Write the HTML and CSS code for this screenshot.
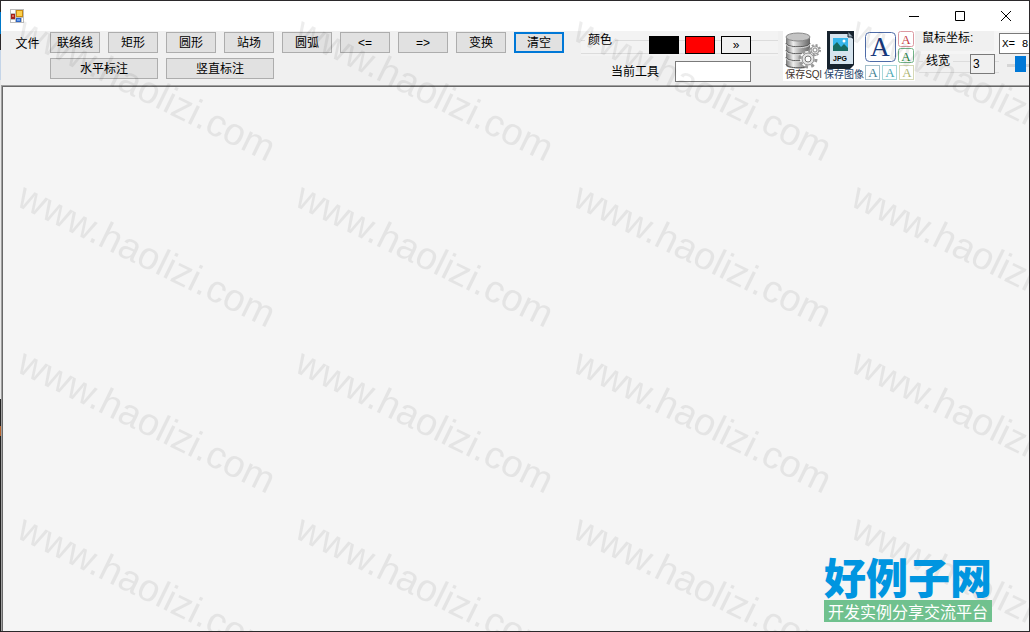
FILE: index.html
```html
<!DOCTYPE html>
<html lang="zh-CN">

<head>
  <meta charset="UTF-8">
  <meta name="viewport" content="width=device-width, initial-scale=1.0">
  <title>站场绘图</title>

  <link rel="stylesheet" href="styles.css">
</head>

<body>
  <div class="window">
    <header class="titlebar">
      <svg class="app-icon" width="14" height="14" viewBox="0 0 14 14">
        <rect width="14" height="14" fill="#bdbdbd"/>
        <path d="M1 1h4v3H1zM1 11h4v2H1zM12 9h1v4h-1z" fill="#fff"/>
        <rect x="6" y="1" width="7" height="7" fill="#c98a10"/>
        <rect x="7" y="2" width="5" height="5" fill="#fdd04a"/>
        <rect x="1" y="5" width="4" height="5" fill="#a3201a"/>
        <rect x="2" y="6" width="2" height="2" fill="#e0695c"/>
        <rect x="6" y="9" width="5" height="4" fill="#2b63c4"/>
        <rect x="7" y="10" width="3" height="2" fill="#6ea2ee"/>
      </svg>
      <div class="window-buttons">
        <button type="button" aria-label="最小化"><svg width="12" height="12" viewBox="0 0 12 12"><path d="M1 6.500h10"/></svg></button>
        <button type="button" aria-label="最大化"><svg width="12" height="12" viewBox="0 0 12 12"><path d="M1.500 1.500h9v9h-9z"/></svg></button>
        <button type="button" aria-label="关闭"><svg width="12" height="12" viewBox="0 0 12 12"><path d="M1 1l10 10M11 1L1 11"/></svg></button>
      </div>
    </header>

    <div class="toolbar">
      <button type="button" class="menu">文件</button>

      <div class="tools">
        <button type="button">联络线</button>
        <button type="button">矩形</button>
        <button type="button">圆形</button>
        <button type="button">站场</button>
        <button type="button">圆弧</button>
        <button type="button">&lt;=</button>
        <button type="button">=&gt;</button>
        <button type="button">变换</button>
        <button type="button" class="active">清空</button>
        <button type="button" class="wide">水平标注</button>
        <button type="button" class="wide">竖直标注</button>
      </div>

      <div class="color-panel">
        <div class="colors">
          <span class="caption">颜色</span>
          <button type="button" class="swatch black" aria-label="黑色"></button>
          <button type="button" class="swatch red" aria-label="红色"></button>
          <button type="button" class="swatch">»</button>
        </div>
        <div class="current">
          <label for="tool">当前工具</label>
          <input id="tool" type="text">
        </div>
      </div>

      <div class="icons">
        <button type="button" class="icon-button save-sql">
          <svg width="40" height="38" viewBox="0 0 40 38">
            <defs>
              <linearGradient id="metal">
                <stop offset="0" stop-color="#777"/>
                <stop offset="0.3" stop-color="#eee"/>
                <stop offset="0.6" stop-color="#aaa"/>
                <stop offset="1" stop-color="#666"/>
              </linearGradient>
            </defs>
            <path d="M3 6v28c0 5 24 5 24 0V6z" fill="url(#metal)"/>
            <path d="M3 12c0 5 24 5 24 0M3 19c0 5 24 5 24 0M3 26c0 5 24 5 24 0M3 33c0 5 24 5 24 0" fill="none" stroke="#555"/>
            <path d="M3 13c0 5 24 5 24 0M3 20c0 5 24 5 24 0M3 27c0 5 24 5 24 0" fill="none" stroke="#ddd"/>
            <ellipse cx="15" cy="6" rx="12" ry="4" fill="#c4c4c4" stroke="#888"/>
            <circle cx="25" cy="28" r="8" fill="#fff"/>
            <circle cx="25" cy="28" r="8" fill="none" stroke="#999" stroke-width="3" stroke-dasharray="3 3.280"/>
            <circle cx="25" cy="28" r="6" fill="#e4e4e4" stroke="#888"/>
            <circle cx="25" cy="28" r="3" fill="#fff" stroke="#777"/>
            <circle cx="32" cy="19" r="5" fill="#fff" stroke="#999" stroke-width="2" stroke-dasharray="2 1.930"/>
            <circle cx="32" cy="19" r="4" fill="#e4e4e4" stroke="#999"/>
            <circle cx="32" cy="19" r="2" fill="#fff" stroke="#888"/>
          </svg>
          <span>保存SQl</span>
        </button>
        <button type="button" class="icon-button save-image">
          <svg width="30" height="38" viewBox="0 0 30 38">
            <path d="M1 0h27v34l-4 4H1z" fill="#17232e"/>
            <path d="M4 3h18l5 5v25H4z" fill="#d6e4ee"/>
            <path d="M22 1v5h5" fill="#9fb0bd" stroke="#17232e"/>
            <rect x="7" y="7" width="15" height="13" fill="#35b6ec"/>
            <path d="M7 20v-5l4-4 4 5 3-3 4 4v3z" fill="#176b62"/>
            <circle cx="18" cy="10" r="1.500" fill="#fff"/>
            <text x="7" y="30" class="jpg">JPG</text>
            <path d="M1 34h26" stroke="#17232e" stroke-width="2"/>
          </svg>
          <span>保存图像</span>
        </button>
        <button type="button" class="icon-button fonts" aria-label="字体">
          <svg width="50" height="49" viewBox="0 0 50 49">
            <g fill="#fff">
              <rect x="0.500" y="1.500" width="30" height="29" rx="4" stroke="#4f6ca8"/>
              <rect x="33.500" y="0.500" width="15" height="15" rx="2" stroke="#dc9aa2"/>
              <rect x="33.500" y="17.500" width="15" height="14" rx="2" stroke="#72b487"/>
              <rect x="0.500" y="34.500" width="14" height="14" stroke="#a5c0cb"/>
              <rect x="17.500" y="34.500" width="14" height="14" stroke="#a9d8da"/>
              <rect x="34.500" y="34.500" width="14" height="14" stroke="#d5d9b5"/>
            </g>
            <g class="letters">
              <text x="15" y="25" class="big" fill="#17397d">A</text>
              <text x="41" y="13" fill="#c43b44">A</text>
              <text x="41" y="30" fill="#238342">A</text>
              <text x="8" y="46" fill="#3b7d90">A</text>
              <text x="25" y="46" fill="#4aa9b2">A</text>
              <text x="42" y="46" fill="#adb573">A</text>
            </g>
          </svg>
        </button>
      </div>

      <div class="status">
        <div class="coords">
          <label for="coords">鼠标坐标:</label>
          <input id="coords" type="text" value="X= 80" readonly>
        </div>
        <div class="line-width">
          <label class="caption" for="line-width">线宽</label>
          <input id="line-width" class="number" type="text" value="3">
          <input class="slider" type="range" min="1" max="10" value="2" aria-label="线宽">
        </div>
      </div>
    </div>

    <main class="canvas">
      <div class="logo">
        <strong>好例子网</strong>
        <span>开发实例分享交流平台</span>
      </div>
    </main>

    <svg class="watermark" aria-hidden="true">
      <defs>
        <pattern id="mark" x="0" y="12" width="278" height="166" patternUnits="userSpaceOnUse">
          <text x="14" y="26" transform="rotate(26 14 26)">www.haolizi.com</text>
        </pattern>
      </defs>
      <rect width="100%" height="100%" fill="url(#mark)"/>
    </svg>
  </div>
</body>

</html>
```
FILE: styles.css
```css
* {
  box-sizing: border-box;
}

/* strip of desktop left of the window */
body {
  margin: 0;
  padding-left: 1px;
  font: 12px/14px "Liberation Sans", "Noto Sans CJK SC", sans-serif;
  color: #000;
  background: linear-gradient(#2b292b 12px, #0078c8 12px 34px, #2b292b 34px 50px, #c5d5e8 50px 80px, #e8e8e8 80px 399px, #222 399px 426px, #b5622c 426px 436px, #222 436px);
}

button,
input {
  font: inherit;
  color: inherit;
  margin: 0;
  padding: 0;
  border-radius: 0;
}

.window {
  position: relative;
  display: flex;
  flex-direction: column;
  min-height: 100vh;
  border: 1px solid #2b292b;
  border-left: 0;
  background: #f0f0f0;
  overflow: hidden;
}

.titlebar {
  display: flex;
  justify-content: space-between;
  align-items: center;
  height: 30px;
  padding-left: 9px;
  background: #fff;
}

.window-buttons {
  display: flex;
}

.window-buttons button {
  display: grid;
  place-items: center;
  width: 46px;
  height: 28px;
  border: 0;
  background: none;
}

.window-buttons path {
  fill: none;
  stroke: #000;
}

.toolbar {
  display: flex;
  height: 54px;
}

.menu {
  align-self: flex-start;
  width: 49px;
  height: 26px;
  padding-left: 4px;
  border: 0;
  background: none;
}

.tools {
  display: grid;
  grid-template-columns: repeat(9, 50px);
  grid-auto-rows: 21px;
  gap: 5px 8px;
  padding-top: 1px;
}

.tools button {
  border: 1px solid #adadad;
  background: #e1e1e1;
}

.tools .wide {
  grid-column: span 2;
}

.tools .active {
  border: 2px solid #0078d7;
}

.color-panel {
  width: 197px;
  margin-left: 17px;
}

.colors,
.line-width {
  display: flex;
}

/* group box line runs behind the caption and the swatches */
.colors {
  gap: 6px;
  height: 25px;
  padding-left: 4px;
  background:
    linear-gradient(#dcdcdc, #dcdcdc) 0 9px / 100% 1px no-repeat,
    linear-gradient(#dcdcdc, #dcdcdc) 0 22px / 100% 1px no-repeat,
    #f3f3f3;
}

.caption {
  align-self: flex-start;
  padding: 2px 3px;
  background: #f3f3f3;
  white-space: nowrap;
}

.colors .caption {
  margin-right: 28px;
}

.swatch {
  width: 30px;
  height: 18px;
  margin-top: 5px;
  border: 1px solid #000;
  background: #f0f0f0;
}

.black {
  background: #000;
}

.red {
  background: #f00;
}

.current {
  display: flex;
  align-items: center;
  gap: 16px;
  padding: 5px 0 0 30px;
}

.current input {
  width: 76px;
  height: 21px;
  border: 1px solid #7a7a7a;
  background: #fff;
}

.icons {
  display: flex;
  padding-left: 5px;
}

.icon-button {
  display: flex;
  flex-direction: column;
  height: 50px;
  border: 0;
  background: #fff;
}

.icon-button span {
  font-size: 10px;
  line-height: 12px;
  white-space: nowrap;
}

.save-sql {
  width: 41px;
}

.save-sql span {
  color: #42342e;
}

.save-image {
  width: 40px;
}

.save-image svg {
  margin-left: 2px;
}

.save-image span {
  color: #27436b;
}

.fonts {
  width: 51px;
  padding-left: 1px;
}

.jpg {
  font: bold 7px "Liberation Sans", sans-serif;
}

.letters {
  font: 13px "Liberation Serif", serif;
  text-anchor: middle;
}

.letters .big {
  font-size: 27px;
}

.status {
  flex: 1;
  min-width: 0;
  margin-left: 4px;
  overflow: hidden;
}

.coords {
  display: flex;
  gap: 5px;
  height: 23px;
  background: #f5f5f5;
}

.coords label {
  flex: none;
  width: 75px;
  height: 20px;
  padding-left: 3px;
  background: #f0f0f0;
}

.coords input {
  flex: none;
  width: 80px;
  height: 21px;
  margin-top: 2px;
  padding-left: 2px;
  border: 1px solid #7a7a7a;
  background: #fff;
  font: 11px "Liberation Mono", monospace;
}

.line-width {
  height: 20px;
  padding-left: 4px;
  background:
    linear-gradient(#dcdcdc, #dcdcdc) 0 7px / 80px 1px no-repeat,
    linear-gradient(#dcdcdc, #dcdcdc) 0 18px / 80px 1px no-repeat;
}

.line-width .caption {
  flex: none;
  padding-top: 0;
  margin-right: 17px;
  background: #f0f0f0;
}

.number {
  flex: none;
  width: 25px;
  height: 20px;
  padding-left: 2px;
  border: 1px solid #7a7a7a;
  background: #f0f0f0;
}

.slider {
  flex: none;
  width: 80px;
  height: 20px;
  margin-left: 12px;
  appearance: none;
  background: linear-gradient(#d6d6d6, #d6d6d6) 0 10px / 100% 3px no-repeat;
}

.slider::-webkit-slider-thumb {
  appearance: none;
  width: 11px;
  height: 16px;
  background: #0078d7;
}

.canvas {
  flex: 1;
  display: flex;
  justify-content: flex-end;
  align-items: flex-end;
  padding: 0 37px 9px 0;
  border-top: 1px solid #a0a0a0;
  border-left: 1px solid #a0a0a0;
  box-shadow: inset 1px 1px #696969;
  background: #f5f5f5;
}

.logo {
  position: relative;
  z-index: 1;
  display: flex;
  flex-direction: column;
  gap: 3px;
  font-family: "Noto Sans CJK SC", sans-serif;
}

.logo strong {
  font-size: 42px;
  line-height: 42px;
  font-weight: 900;
  color: #0095e0;
}

.logo span {
  padding: 0 2px;
  font-size: 16px;
  line-height: 22px;
  text-align: center;
  color: #fff;
  background: #70c18e;
}

.watermark {
  position: absolute;
  inset: 0;
  width: 100%;
  height: 100%;
  pointer-events: none;
}

.watermark text {
  font: 38px "Liberation Sans", sans-serif;
  fill: #000;
  fill-opacity: 0.07;
}
```
